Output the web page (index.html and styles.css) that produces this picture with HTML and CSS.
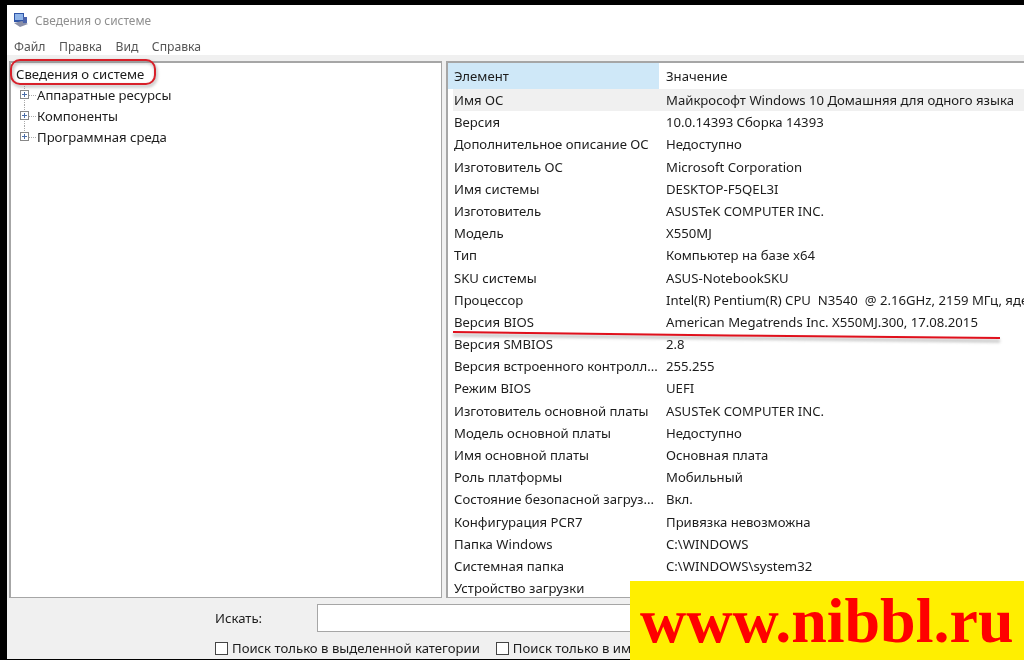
FILE: index.html
```html
<!DOCTYPE html>
<html lang="ru">
<head>
<meta charset="utf-8">
<title>Сведения о системе</title>
<link rel="stylesheet" href="styles.css">
</head>
<body>
<div class="window">
  <div class="titlebar">
    <svg class="appicon" width="16" height="16" viewBox="0 0 16 16"><rect x="1" y="1" width="10" height="9" fill="#2f55a8"/><rect x="2" y="2" width="8" height="6" fill="#8fb4e8"/><path d="M1 11 L9 9 L15 12 L7 15 Z" fill="#8a8fa8"/><rect x="10" y="5" width="4" height="6" fill="#4a63ab"/></svg>
    <span>Сведения о системе</span>
  </div>
  <div class="menubar"><span>Файл</span><span>Правка</span><span>Вид</span><span>Справка</span></div>
  <div class="panes">
    <div class="tree">
      <div class="tree-root">Сведения о системе</div>
      <div class="tree-item"><i class="plus"></i><span>Аппаратные ресурсы</span></div>
      <div class="tree-item"><i class="plus"></i><span>Компоненты</span></div>
      <div class="tree-item"><i class="plus"></i><span>Программная среда</span></div>
    </div>
    <div class="list">
      <div class="row head"><div class="c1">Элемент</div><div class="c2">Значение</div></div>
      <div class="row first"><div class="c1">Имя ОС</div><div class="c2">Майкрософт Windows 10 Домашняя для одного языка</div></div>
      <div class="row"><div class="c1">Версия</div><div class="c2">10.0.14393 Сборка 14393</div></div>
      <div class="row"><div class="c1">Дополнительное описание ОС</div><div class="c2">Недоступно</div></div>
      <div class="row"><div class="c1">Изготовитель ОС</div><div class="c2">Microsoft Corporation</div></div>
      <div class="row"><div class="c1">Имя системы</div><div class="c2">DESKTOP-F5QEL3I</div></div>
      <div class="row"><div class="c1">Изготовитель</div><div class="c2">ASUSTeK COMPUTER INC.</div></div>
      <div class="row"><div class="c1">Модель</div><div class="c2">X550MJ</div></div>
      <div class="row"><div class="c1">Тип</div><div class="c2">Компьютер на базе x64</div></div>
      <div class="row"><div class="c1">SKU системы</div><div class="c2">ASUS-NotebookSKU</div></div>
      <div class="row"><div class="c1">Процессор</div><div class="c2">Intel(R) Pentium(R) CPU&nbsp; N3540&nbsp; @ 2.16GHz, 2159 МГц, ядер: 4</div></div>
      <div class="row"><div class="c1">Версия BIOS</div><div class="c2">American Megatrends Inc. X550MJ.300, 17.08.2015</div></div>
      <div class="row"><div class="c1">Версия SMBIOS</div><div class="c2">2.8</div></div>
      <div class="row"><div class="c1">Версия встроенного контролл...</div><div class="c2">255.255</div></div>
      <div class="row"><div class="c1">Режим BIOS</div><div class="c2">UEFI</div></div>
      <div class="row"><div class="c1">Изготовитель основной платы</div><div class="c2">ASUSTeK COMPUTER INC.</div></div>
      <div class="row"><div class="c1">Модель основной платы</div><div class="c2">Недоступно</div></div>
      <div class="row"><div class="c1">Имя основной платы</div><div class="c2">Основная плата</div></div>
      <div class="row"><div class="c1">Роль платформы</div><div class="c2">Мобильный</div></div>
      <div class="row"><div class="c1">Состояние безопасной загруз...</div><div class="c2">Вкл.</div></div>
      <div class="row"><div class="c1">Конфигурация PCR7</div><div class="c2">Привязка невозможна</div></div>
      <div class="row"><div class="c1">Папка Windows</div><div class="c2">C:\WINDOWS</div></div>
      <div class="row"><div class="c1">Системная папка</div><div class="c2">C:\WINDOWS\system32</div></div>
      <div class="row"><div class="c1">Устройство загрузки</div></div>
    </div>
  </div>
  <div class="search">
    <div class="search-line"><span class="search-label">Искать:</span><div class="search-input"></div></div>
    <div class="checks">
      <span class="check"><i class="box"></i>Поиск только в выделенной категории</span>
      <span class="check"><i class="box"></i>Поиск только в им</span>
    </div>
  </div>
</div>
<svg class="marks" width="1024" height="660" viewBox="0 0 1024 660">
  <rect class="shadow" x="12" y="62" width="144" height="24" rx="9"/>
  <rect class="ring" x="11" y="60" width="144" height="24" rx="9"/>
  <path class="shadow" d="M453 335 C600 337 850 339 1000 341"/>
  <path class="ink" d="M453 332 C600 335 850 336 1000 338"/>
</svg>
<div class="banner">www.nibbl.ru</div>
</body>
</html>
```
FILE: styles.css
```css
* { box-sizing: border-box; }
html, body { margin: 0; height: 660px; overflow: hidden; background: #000; }
body { position: relative; font-family: "Noto Sans", sans-serif; font-size: 13.15px; color: #1c1c1c; }
.window { margin: 5px 0 0 7px; height: 654px; background: #f0f0f0; display: flex; flex-direction: column; filter: blur(.35px); }
.titlebar { height: 30px; background: #fff; display: flex; align-items: center; gap: 6px; padding-left: 6px; color: #8f8f8f; font-size: 11.9px; flex: none; }
.menubar { height: 20px; padding-top: 2px; background: #fff; display: flex; gap: 13.5px; padding-left: 7px; color: #555; font-size: 12.2px; align-items: center; flex: none; }
.panes { flex: none; height: 537px; margin-top: 6px; display: flex; gap: 4px; padding-left: 2px; }
.tree { width: 433px; background: #fff; border: 2px solid #a6a6a6; border-right-width: 1px; border-bottom-width: 1px; padding: 1px 0 0 5px; }
.tree-root { height: 20px; line-height: 20px; }
.tree-item { height: 21px; display: flex; align-items: center; padding-left: 4px; gap: 8px; position: relative; }
.tree-item::before { content: ""; position: absolute; left: 8px; top: 0; height: 100%; border-left: 1px dotted #aaa; }
.tree-item:last-child::before { height: 50%; }
.tree-item::after { content: ""; position: absolute; left: 13px; top: 50%; width: 7px; border-top: 1px dotted #aaa; }
.plus { width: 9px; height: 9px; border: 1px solid #888; background: linear-gradient(#4b6ea8,#4b6ea8) center/5px 1px no-repeat, linear-gradient(#4b6ea8,#4b6ea8) center/1px 5px no-repeat, #fff; flex: none; position: relative; z-index: 1; }
.list { flex: 1; background: #fff; border: 2px solid #a6a6a6; border-right: 0; border-bottom-width: 1px; overflow: hidden; }
.row { display: flex; height: 22.2px; line-height: 22px; white-space: nowrap; }
.c1 { width: 211px; flex: none; padding-left: 6px; overflow: hidden; }
.c2 { padding-left: 7px; }
.head { height: 26px; line-height: 26px; }
.head .c1 { background: #cfe8f8; }
.first { background: #f0f0f0; margin-left: 5px; }
.first .c1 { width: 206px; padding-left: 1px; }
.search { flex: 1; display: flex; flex-direction: column; padding: 6px 0 0 208px; }
.search-line { display: flex; align-items: center; height: 28px; }
.search-label { width: 102px; }
.search-input { width: 400px; height: 28px; background: #fff; border: 1px solid #a6a6a6; }
.checks { display: flex; gap: 16px; margin-top: 8px; white-space: nowrap; }
.check { display: flex; align-items: center; gap: 4px; line-height: 16px; }
.box { width: 13px; height: 13px; border: 1px solid #444; background: #fff; flex: none; }
.marks { position: absolute; left: 0; top: 0; pointer-events: none; }
.marks rect, .marks path { fill: none; }
.marks .ring { stroke: #d8202a; stroke-width: 2; }
.marks .ink { stroke: #e0101c; stroke-width: 2; }
.marks .shadow { stroke: #888; stroke-width: 3; opacity: .5; filter: blur(1.5px); }
.banner { position: absolute; left: 630px; top: 581px; width: 394px; height: 79px; background: #ffef00; color: #f00; font-family: "Liberation Serif", serif; font-weight: 700; font-size: 64px; line-height: 80px; padding-left: 10px; white-space: nowrap; overflow: hidden; }
```
